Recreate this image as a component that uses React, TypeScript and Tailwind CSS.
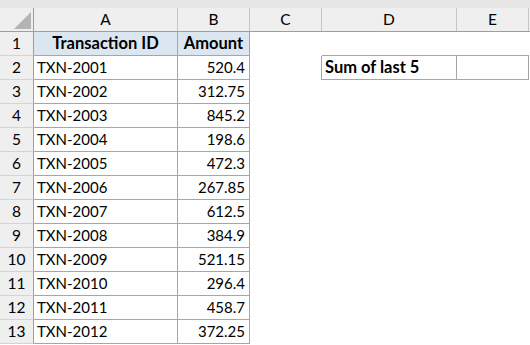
import React from "react";

const data: [string, string][] = [
  ["TXN-2001", "520.4"],
  ["TXN-2002", "312.75"],
  ["TXN-2003", "845.2"],
  ["TXN-2004", "198.6"],
  ["TXN-2005", "472.3"],
  ["TXN-2006", "267.85"],
  ["TXN-2007", "612.5"],
  ["TXN-2008", "384.9"],
  ["TXN-2009", "521.15"],
  ["TXN-2010", "296.4"],
  ["TXN-2011", "458.7"],
  ["TXN-2012", "372.25"],
];

function RowHead({ n }: { n: number }) {
  return (
    <div className="w-[34px] shrink-0 h-full box-border border-r border-r-[#9e9e9e] border-b border-b-[#d4d4d4] bg-[#efefef] flex items-center justify-center text-[15.5px]">
      {n}
    </div>
  );
}

export default function App() {
  return (
    <div
      className="w-[530px] h-[345px] overflow-hidden bg-white text-black text-[15px] leading-none"
      style={{ fontFamily: "Lato, 'Open Sans', sans-serif" }}
    >
      <div className="h-[8px] bg-[#e6e6e6]" />
      {/* column header */}
      <div className="h-[24px] flex bg-[#efefef] box-border border-b border-b-[#9e9e9e] text-[15.5px]">
        <div className="w-[34px] shrink-0 h-full box-border border-r border-r-[#9e9e9e] relative">
          <svg width="17" height="17" className="absolute left-[14px] top-[4px]" viewBox="0 0 17 17">
            <polygon points="17,0 17,17 0,17" fill="#b4b4b4" />
          </svg>
        </div>
        <div className="w-[144px] shrink-0 h-full box-border border-r border-r-[#c6c6c6] flex items-center justify-center">A</div>
        <div className="w-[72px] shrink-0 h-full box-border border-r border-r-[#c6c6c6] flex items-center justify-center">B</div>
        <div className="w-[72px] shrink-0 h-full box-border border-r border-r-[#c6c6c6] flex items-center justify-center">C</div>
        <div className="w-[135px] shrink-0 h-full box-border border-r border-r-[#c6c6c6] flex items-center justify-center">D</div>
        <div className="w-[72px] shrink-0 h-full box-border border-r border-r-[#c6c6c6] flex items-center justify-center">E</div>
        <div className="flex-1" />
      </div>
      {/* row 1 */}
      <div className="h-[24px] flex">
        <RowHead n={1} />
        <div className="w-[144px] shrink-0 h-full box-border border-r border-b border-[#a6a6a6] bg-[#dce6f1] font-bold text-[16.5px] flex items-center justify-center">
          Transaction ID
        </div>
        <div className="w-[72px] shrink-0 h-full box-border border-r border-b border-[#a6a6a6] bg-[#dce6f1] font-bold text-[16.5px] flex items-center justify-center">
          Amount
        </div>
        <div className="w-[72px] shrink-0 h-full" />
        <div className="w-[135px] shrink-0 h-full box-border border-b border-[#a6a6a6]" />
        <div className="w-[72px] shrink-0 h-full box-border border-b border-[#a6a6a6]" />
        <div className="flex-1" />
      </div>
      {data.map(([id, amt], i) => (
        <div key={id} className="h-[24px] flex">
          <RowHead n={i + 2} />
          <div className="w-[144px] shrink-0 h-full box-border border-r border-b border-[#a6a6a6] flex items-center pl-[3px]">
            {id}
          </div>
          <div className="w-[72px] shrink-0 h-full box-border border-r border-b border-[#a6a6a6] flex items-center justify-end pr-[4px]">
            {amt}
          </div>
          {i === 0 ? (
            <>
              <div className="w-[72px] shrink-0 h-full box-border border-r border-[#a6a6a6]" />
              <div className="w-[135px] shrink-0 h-full box-border border-r border-b border-[#a6a6a6] font-bold text-[16.5px] flex items-center pl-[3px]">
                Sum of last 5
              </div>
              <div className="w-[72px] shrink-0 h-full box-border border-r border-b border-[#a6a6a6]" />
            </>
          ) : null}
          <div className="flex-1" />
        </div>
      ))}
    </div>
  );
}
